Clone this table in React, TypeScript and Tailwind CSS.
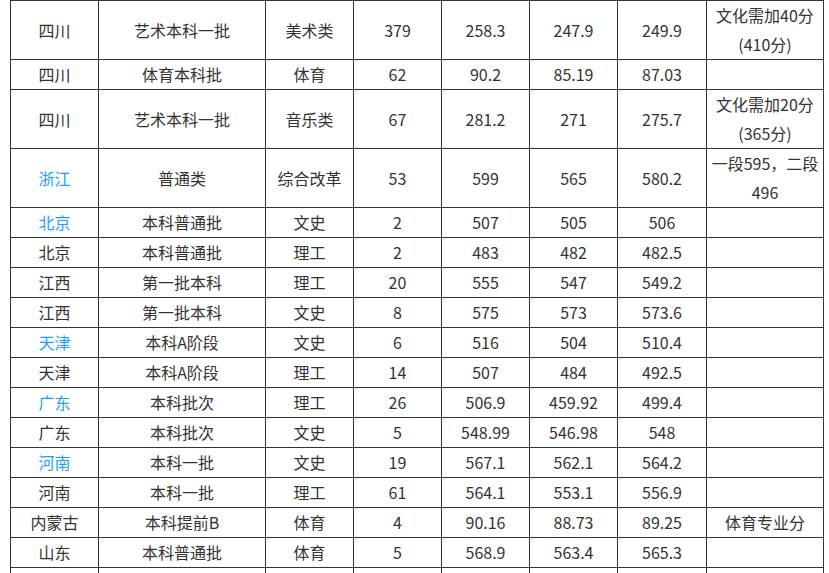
type Row = {
  prov: string;
  blue?: boolean;
  batch: string;
  kind: string;
  count: string;
  max: string;
  min: string;
  avg: string;
  note?: string[];
};

const rows: Row[] = [
  { prov: "四川", batch: "艺术本科一批", kind: "美术类", count: "379", max: "258.3", min: "247.9", avg: "249.9", note: ["文化需加40分", "(410分)"] },
  { prov: "四川", batch: "体育本科批", kind: "体育", count: "62", max: "90.2", min: "85.19", avg: "87.03" },
  { prov: "四川", batch: "艺术本科一批", kind: "音乐类", count: "67", max: "281.2", min: "271", avg: "275.7", note: ["文化需加20分", "(365分)"] },
  { prov: "浙江", blue: true, batch: "普通类", kind: "综合改革", count: "53", max: "599", min: "565", avg: "580.2", note: ["一段595，二段", "496"] },
  { prov: "北京", blue: true, batch: "本科普通批", kind: "文史", count: "2", max: "507", min: "505", avg: "506" },
  { prov: "北京", batch: "本科普通批", kind: "理工", count: "2", max: "483", min: "482", avg: "482.5" },
  { prov: "江西", batch: "第一批本科", kind: "理工", count: "20", max: "555", min: "547", avg: "549.2" },
  { prov: "江西", batch: "第一批本科", kind: "文史", count: "8", max: "575", min: "573", avg: "573.6" },
  { prov: "天津", blue: true, batch: "本科A阶段", kind: "文史", count: "6", max: "516", min: "504", avg: "510.4" },
  { prov: "天津", batch: "本科A阶段", kind: "理工", count: "14", max: "507", min: "484", avg: "492.5" },
  { prov: "广东", blue: true, batch: "本科批次", kind: "理工", count: "26", max: "506.9", min: "459.92", avg: "499.4" },
  { prov: "广东", batch: "本科批次", kind: "文史", count: "5", max: "548.99", min: "546.98", avg: "548" },
  { prov: "河南", blue: true, batch: "本科一批", kind: "文史", count: "19", max: "567.1", min: "562.1", avg: "564.2" },
  { prov: "河南", batch: "本科一批", kind: "理工", count: "61", max: "564.1", min: "553.1", avg: "556.9" },
  { prov: "内蒙古", batch: "本科提前B", kind: "体育", count: "4", max: "90.16", min: "88.73", avg: "89.25", note: ["体育专业分"] },
  { prov: "山东", batch: "本科普通批", kind: "体育", count: "5", max: "568.9", min: "563.4", avg: "565.3" },
  { prov: "", batch: "", kind: "", count: "", max: "", min: "", avg: "" },
];

const td = "border border-[#333] p-0 text-center align-middle";

export default function App() {
  return (
    <div
      className="min-h-screen bg-white text-[#333] text-[16px] leading-[29px]"
      style={{ fontFamily: '"Noto Sans CJK SC", "Noto Sans", sans-serif' }}
    >
      <table className="ml-[10px] w-[813px] table-fixed border-collapse">
        <colgroup>
          <col className="w-[88px]" />
          <col className="w-[167px]" />
          <col className="w-[88px]" />
          <col className="w-[88px]" />
          <col className="w-[88px]" />
          <col className="w-[88px]" />
          <col className="w-[89px]" />
          <col className="w-[117px]" />
        </colgroup>
        <tbody>
          {rows.map((r, i) => (
            <tr key={i} className={r.prov === "" ? "h-[30px]" : ""}>
              <td className={`${td} ${r.blue ? "text-[#1e9fff]" : ""}`}>{r.prov}</td>
              <td className={td}>{r.batch}</td>
              <td className={td}>{r.kind}</td>
              <td className={td}>{r.count}</td>
              <td className={td}>{r.max}</td>
              <td className={td}>{r.min}</td>
              <td className={td}>{r.avg}</td>
              <td className={`${td} whitespace-nowrap`}>
                {r.note?.map((n, j) => (
                  <div key={j}>{n}</div>
                ))}
              </td>
            </tr>
          ))}
        </tbody>
      </table>
    </div>
  );
}
